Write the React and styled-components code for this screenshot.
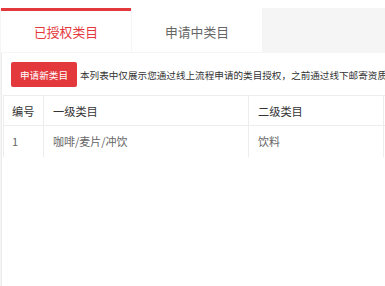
import React from "react";
import styled, { createGlobalStyle } from "styled-components";

const Global = createGlobalStyle`
  html, body { margin: 0; padding: 0; background: #fff; overflow: hidden; }
  body { font-family: "Microsoft YaHei", "Noto Sans CJK SC", "Noto Sans", sans-serif; }
  * { box-sizing: border-box; }
`;

const Page = styled.div`
  width: 385px;
  height: 286px;
  padding-top: 8px;
  overflow: hidden;
`;

const Frame = styled.div`
  background: #f5f5f5;
  padding-left: 1px;
  height: 278px;
  display: flex;
  flex-direction: column;
`;

const TabBar = styled.div`
  display: flex;
  gap: 1px;
  height: 44px;
`;

const Tab = styled.div`
  width: 130px;
  background: #fff;
  border-top: 3px solid ${p => (p.$active ? "#e4393c" : "#fff")};
  color: ${p => (p.$active ? "#e4393c" : "#666")};
  font-size: 12.8px;
  display: flex;
  align-items: center;
  justify-content: center;
`;

const Panel = styled.div`
  margin-top: 1px;
  flex: 1;
  background: #fff;
  border-left: 1px solid #ececec;
  padding: 9px 0 0 0;
  overflow: hidden;
`;

const Toolbar = styled.div`
  display: flex;
  align-items: center;
  padding-left: 9px;
  gap: 3px;
  white-space: nowrap;
  overflow: hidden;
`;

const Button = styled.button`
  width: 66px;
  height: 25px;
  border: none;
  border-radius: 2px;
  background: #e4393c;
  color: #fff;
  font-family: inherit;
  font-size: 9.6px;
  padding: 0;
  flex: none;
`;

const Notice = styled.span`
  font-size: 9.6px;
  color: #333;
`;

const Table = styled.table`
  margin-top: 8px;
  margin-left: 1px;
  border-collapse: collapse;
  table-layout: fixed;
  width: 520px;
`;

const Cell = styled.td`
  border-top: 1px solid #ededed;
  border-left: 1px solid #ededed;
  padding: 0 0 0 ${p => p.$pad || 9}px;
  height: ${p => (p.$head ? 30 : 31)}px;
  font-size: ${p => (p.$head ? 11.2 : 11)}px;
  color: ${p => (p.$head ? "#333" : "#666")};
  font-weight: normal;
  text-align: left;
  white-space: nowrap;
  overflow: hidden;
`;

const cols = [40, 205, 135, 140];

export default function App() {
  return (
    <>
      <Global />
      <Page>
        <Frame>
          <TabBar>
            <Tab $active>已授权类目</Tab>
            <Tab>申请中类目</Tab>
          </TabBar>
          <Panel>
            <Toolbar>
              <Button>申请新类目</Button>
              <Notice>本列表中仅展示您通过线上流程申请的类目授权，之前通过线下邮寄资质</Notice>
            </Toolbar>
            <Table>
              <colgroup>
                {cols.map((w, i) => (
                  <col key={i} style={{ width: w }} />
                ))}
              </colgroup>
              <thead>
                <tr>
                  <Cell as="th" $head $pad={8}>编号</Cell>
                  <Cell as="th" $head>一级类目</Cell>
                  <Cell as="th" $head>二级类目</Cell>
                  <Cell as="th" $head></Cell>
                </tr>
              </thead>
              <tbody>
                <tr>
                  <Cell $pad={8}>1</Cell>
                  <Cell>咖啡/麦片/冲饮</Cell>
                  <Cell>饮料</Cell>
                  <Cell></Cell>
                </tr>
              </tbody>
            </Table>
          </Panel>
        </Frame>
      </Page>
    </>
  );
}
